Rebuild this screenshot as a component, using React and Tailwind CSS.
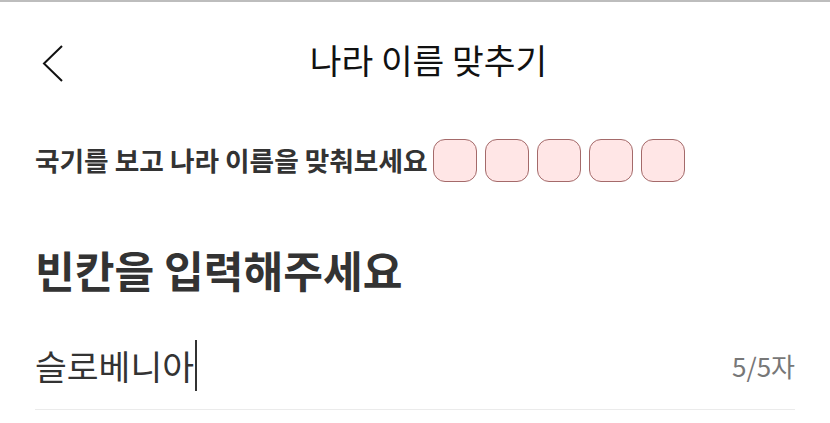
export default function App() {
  const boxes = [0, 1, 2, 3, 4];
  return (
    <div
      className="w-[830px] h-[423px] bg-white overflow-hidden border-t-2 border-[#bdbdbd]"
      style={{ fontFamily: '"Noto Sans CJK KR", "Noto Sans", sans-serif' }}
    >
      {/* header */}
      <div className="relative h-[118px] flex items-center justify-center pl-[27px]">
        <svg
          className="absolute left-[41px] top-[41px]"
          width="24"
          height="40"
          viewBox="0 0 24 40"
          fill="none"
        >
          <path d="M21 3 L3 20.5 L21 38" stroke="#111" strokeWidth="2" />
        </svg>
        <h1 className="text-[34.5px] leading-none text-[#111] -mt-[4px]">나라 이름 맞추기</h1>
      </div>

      <div className="px-[35px]">
        <div className="mt-[19px] flex items-center">
          <span className="text-[26.7px] font-bold text-[#333] leading-none">국기를 보고 나라 이름을 맞춰보세요</span>
          <div className="flex gap-[8px] ml-[5px]">
            {boxes.map((b) => (
              <div
                key={b}
                className="w-[44px] h-[43px] rounded-[12px] bg-[#ffe6e6] border-[1.5px] border-[#a46a6a]"
              />
            ))}
          </div>
        </div>

        <div className="mt-[66px] text-[43.2px] font-bold text-[#333] leading-none">
          빈칸을 입력해주세요
        </div>

        <div className="mt-[49px] flex items-center justify-between border-b border-[#ebebeb] pb-[18px]">
          <div className="flex items-center">
            <span className="text-[34.6px] text-[#333] leading-none">슬로베니아</span>
            <span className="w-[2px] h-[51px] bg-[#333] ml-[1px]" />
          </div>
          <span className="text-[26px] text-[#777] leading-none">5/5자</span>
        </div>
      </div>
    </div>
  );
}
